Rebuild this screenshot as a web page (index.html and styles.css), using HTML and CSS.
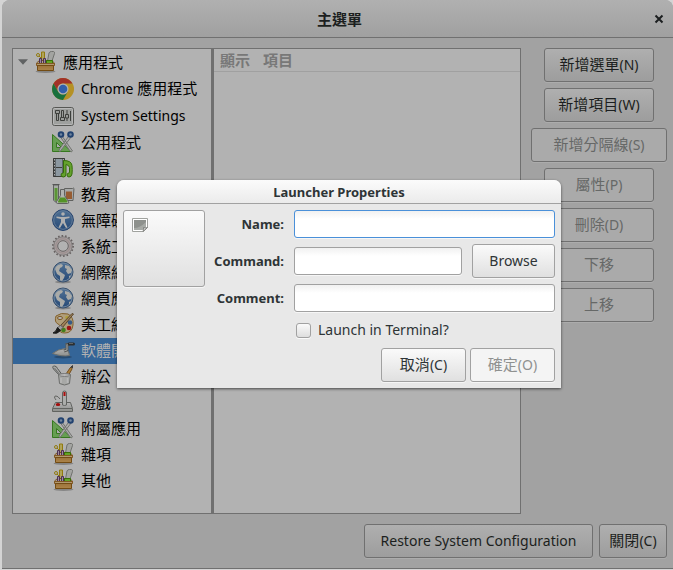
FILE: index.html
```html
<!DOCTYPE html>
<html lang="zh-Hant">
<head>
<meta charset="utf-8">
<title>主選單</title>
<link rel="stylesheet" href="styles.css">
</head>
<body>
<svg class="sprite" aria-hidden="true">
  <defs>
    <linearGradient id="g-blue" x1="0" y1="0" x2="0" y2="1"><stop offset="0" stop-color="#729fcf"/><stop offset="1" stop-color="#3465a4"/></linearGradient>
    <linearGradient id="g-grey" x1="0" y1="0" x2="0" y2="1"><stop offset="0" stop-color="#fafafa"/><stop offset="1" stop-color="#c4c6c2"/></linearGradient>
    <linearGradient id="g-wood" x1="0" y1="0" x2="0" y2="1"><stop offset="0" stop-color="#d9a052"/><stop offset="1" stop-color="#efb866"/></linearGradient>
  </defs>
  <symbol id="toolbox" viewBox="0 0 24 24">
    <ellipse cx="12.500" cy="21.500" rx="10" ry="1.500" fill="#000" opacity=".25"/>
    <path d="M3.500 13l3-2.500h12l3 2.500v2h-18z" fill="#f7e2b8" stroke="#a97430"/>
    <path d="M14.500 11l1.500-8q.5-1.500 2.500-1.500h2q1.500.5 1 2L19 11z" fill="#e2e4e0" stroke="#9a9c97"/>
    <path d="M8.500 10V2h3v8" fill="#f5e27a" stroke="#c9a914"/>
    <circle cx="5" cy="5" r="1.500" fill="none" stroke="#c9a914"/><path d="M6 6l2 2" stroke="#c9a914"/>
    <path d="M6.500 13V8.500h2V13M10.500 13V8.500h2V13" fill="#d9bfd6" stroke="#6b4474"/>
    <path d="M13.500 13v-2.500h6V13" fill="#8ae234" stroke="#4e9a06"/>
    <path d="M3.500 13.500h18v2h-18z" fill="#f6d49c" stroke="#b47b34"/>
    <path d="M4.500 15.500h16v5h-16z" fill="url(#g-wood)" stroke="#a0691c"/>
  </symbol>
  <symbol id="chrome" viewBox="0 0 24 24">
    <circle cx="12" cy="12" r="11" fill="#fbc934"/>
    <path d="M2.500 6.500A11 11 0 0 1 21.500 6.500H12a5.500 5.500 0 0 0-4.800 8.200z" fill="#e04438"/>
    <path d="M2.500 6.500A11 11 0 0 0 12 23l4.800-8.300A5.500 5.500 0 0 1 7.200 14.700z" fill="#229b55"/>
    <circle cx="12" cy="12" r="5.500" fill="#f4f4f4"/><circle cx="12" cy="12" r="4.300" fill="#4384ee"/>
  </symbol>
  <symbol id="settings" viewBox="0 0 24 24">
    <rect x="1.500" y="3.500" width="21" height="18" rx="2" fill="#dcdedb" stroke="#777975"/>
    <rect x="2.500" y="4.500" width="19" height="16" rx="1" fill="none" stroke="#fff"/>
    <path d="M4.500 6.500h4v3h-4zM5.500 9.500h2v7h-2zM10.500 6.500h2v7h-2zM9.500 13.500h4v3h-4zM16 6v4M16 14v3M14.500 10.500h3v3.500h-3zM19.500 7v10" fill="#d5d7d4" stroke="#555753"/>
  </symbol>
  <symbol id="scissors" viewBox="0 0 24 24">
    <path d="M1.500 4.500v17h19z" fill="#8edb72" stroke="#4da52d"/>
    <path d="M5.500 12.500v5h5z" fill="#f0f0f0" stroke="#4da52d"/>
    <path d="M8.500 5.500L19 21q1.500 1.500 2.500 0L11 6M18.500 5L8.500 19q-1 2 .5 2.500L20.500 6.500" fill="#f1f2f0" stroke="#9c9e9a"/>
    <circle cx="10" cy="4.500" r="2.300" fill="#9db9da" stroke="#2f5c9b" stroke-width="2"/>
    <circle cx="19.500" cy="4.500" r="2.300" fill="#9db9da" stroke="#2f5c9b" stroke-width="2"/>
  </symbol>
  <symbol id="media" viewBox="0 0 24 24">
    <path d="M2.500 2.500h11v18h-11z" fill="#c3d3e0" stroke="#555753"/>
    <path d="M3.500 2v19M12.500 2v19" stroke="#4a4d4d" stroke-width="2"/><path d="M3.500 3v18M12.500 3v18" stroke="#eee" stroke-dasharray="1.500 1.500"/>
    <path d="M5 11.500h6" stroke="#555753"/>
    <path d="M12.500 4.500q8 0 8.500 5 .5 4 0 8.500-.5 3-3 3-2 0-2-2t2.500-2.300V11.500q-.5-2.500-3.500-3v9.500q0 3-2.500 3-2.500 0-2.500-2t2.500-2.200z" fill="#8be03f" stroke="#4a960f"/>
  </symbol>
  <symbol id="education" viewBox="0 0 24 24">
    <path d="M2.500 3h5v15q-2.500 4-5 0z" fill="#e7efe7" stroke="#858784"/><path d="M3.500 6h3v12q-1.500 2-3 0z" fill="#7fd04a"/><path d="M1.500 2.500h7" stroke="#777"/>
    <path d="M13.500 6.500h8q1-1 1.500 0l-1 12h-8z" fill="#e9eceb" stroke="#858784"/><path d="M15 9.500h6v7.500h-6z" fill="#d08045"/>
    <path d="M9.500 7.500h4v6l4 6q1 2-1 2h-10q-2-.5-1-2l4-6z" fill="#f4f8f3" stroke="#858784"/><path d="M9 15.500h5l2.500 4q0 1-1 1h-8q-1-.3-.5-1z" fill="#73cc35"/>
  </symbol>
  <symbol id="access" viewBox="0 0 24 24">
    <circle cx="12" cy="12" r="10.400" fill="url(#g-blue)" stroke="#2d5794"/><circle cx="12" cy="12" r="9.300" fill="none" stroke="#87aad1"/>
    <circle cx="12" cy="6" r="1.800" fill="#f4f5f4"/><path d="M5.500 8.500L10 9h4l4.500-.5v1.500L14 11v3l2.500 5.500-1.500.5-3-5-3 5-1.500-.5L10 14v-3L5.500 10z" fill="#f4f5f4"/>
  </symbol>
  <symbol id="gear" viewBox="0 0 24 24">
    <circle cx="12" cy="12" r="10" fill="none" stroke="#8f8787" stroke-width="2" stroke-dasharray="1.600 1.890"/>
    <circle cx="12" cy="12" r="7.300" fill="none" stroke="#e6e0e0" stroke-width="4"/>
    <circle cx="12" cy="12" r="9.200" fill="none" stroke="#a39a9a" stroke-width=".8"/>
    <circle cx="12" cy="12" r="7.200" fill="none" stroke="#dcc8c8" stroke-width="1.500"/>
    <circle cx="12" cy="12" r="5.300" fill="none" stroke="#938b8b"/>
  </symbol>
  <symbol id="globe" viewBox="0 0 24 24">
    <ellipse cx="12" cy="22" rx="8" ry="1.500" opacity=".25"/>
    <circle cx="12" cy="12" r="10" fill="url(#g-blue)" stroke="#4c6c93"/><circle cx="12" cy="12" r="9" fill="none" stroke="#9ab9da"/>
    <path d="M4 9q1-4 6-5l2 1-1 2-2 1-1 3 3 2 3 2-1 3-2 3-2-1v-4L6 14zM14 5l4 1 3 4-1 3-3 1-2-3 1-2-2-1zM18 16l2-1-2 4z" fill="#eceeea"/>
  </symbol>
  <symbol id="palette" viewBox="0 0 24 24">
    <path d="M5 4q5-4 12-2 6 3 5 11-1 8-8 8-6 0-6-4 2-4-1-5-4-2-2-8z" fill="#f4dca9" stroke="#b5853c"/>
    <ellipse cx="9" cy="6" rx="2.500" ry="1.600" fill="#f4f4f4" stroke="#b07d38"/><circle cx="16" cy="5.500" r="1.800" fill="#f5dc52"/><circle cx="19" cy="10.500" r="2.300" fill="#4e7fb9"/><circle cx="18" cy="16" r="2.300" fill="#dc1d1d"/><circle cx="12.500" cy="18" r="2.300" fill="#5cb224"/>
    <path d="M21 1.500L9.500 13.500l2 2L22.500 2z" fill="#ddb27a" stroke="#7d6440"/><path d="M9.500 13l2.500 2.500-3 3L6.500 16z" fill="#ddd" stroke="#777"/><path d="M6.500 15.500l3 3Q6 22.500 2 21q3-1 4.500-5.500z" fill="#242626" stroke="#242626"/>
  </symbol>
  <symbol id="trowel" viewBox="0 0 24 24">
    <ellipse cx="12" cy="19" rx="9" ry="1.500" opacity=".25"/>
    <path d="M1.500 15.500Q7 11 14.500 10.500q4 3 4 7-7 1.500-17-2z" fill="url(#g-grey)" stroke="#999b96"/>
    <path d="M13 13l3-1V6.500h3" fill="none" stroke="#7b7d7a" stroke-width="3"/><path d="M13 13l3-1V6.500h2" fill="none" stroke="#e2e4e0"/>
    <path d="M18 6h4.500" stroke="#3d4143" stroke-width="3" stroke-linecap="round"/><path d="M18 5.500h4" stroke="#85898a"/>
  </symbol>
  <symbol id="office" viewBox="0 0 24 24">
    <path d="M10 13L2.500 5q-2-3 1-3 2 0 3 2.500L12 12z" fill="#e9ebe8" stroke="#747774"/><path d="M3.500 4L10 12" stroke="#999"/>
    <path d="M13 13l6-9 2-2v3l-5 9z" fill="#f0b14b" stroke="#a06c2e"/><path d="M19.500 3.500l2-2v2.500" fill="#555" stroke="#555"/>
    <path d="M7.500 10.500q6-2 12 0l-1 9q-5 3-10 0z" fill="#e8eae7" stroke="#959794"/><ellipse cx="13.500" cy="11" rx="5" ry="1.500" fill="#fff" stroke="#aaa"/><path d="M10 14v5M16.500 14v5" stroke="#fff" stroke-width="1.500"/>
  </symbol>
  <symbol id="joystick" viewBox="0 0 24 24">
    <path d="M5 10q-3-4 0-4 2 0 4 3" fill="none" stroke="#878985"/>
    <path d="M4.500 12.500h15l2 6v3h-20v-3z" fill="url(#g-grey)" stroke="#878985"/><path d="M2 18.500h19" stroke="#878985"/>
    <path d="M11.500 15V3q0-2 2-2t2 2v12q-2 1-4 0z" fill="#eff0ee" stroke="#878985"/><path d="M12.500 2h2v4h-2z" fill="#ef1515"/><ellipse cx="7" cy="14.500" rx="2.300" ry="1.600" fill="#df1010"/>
  </symbol>
</svg>

<main class="window">
  <header class="titlebar">
    <h1>主選單</h1>
    <button class="close" aria-label="Close"><svg viewBox="0 0 10 10"><path d="M1.500 1.500l7 7M8.500 1.500l-7 7"/></svg></button>
  </header>
  <div class="content">
    <div class="upper">
      <div class="panes">
        <ul class="tree">
          <li class="root"><svg class="arrow" viewBox="0 0 11 6"><path d="M0 0h11L5.500 6z"/></svg><svg class="icon"><use href="#toolbox"/></svg>應用程式</li>
          <li class="tall"><svg class="icon"><use href="#chrome"/></svg><span><span class="latin">Chrome</span> 應用程式</span></li>
          <li class="tall"><svg class="icon"><use href="#settings"/></svg><span class="latin">System Settings</span></li>
          <li><svg class="icon"><use href="#scissors"/></svg>公用程式</li>
          <li><svg class="icon"><use href="#media"/></svg>影音</li>
          <li><svg class="icon"><use href="#education"/></svg>教育</li>
          <li><svg class="icon"><use href="#access"/></svg>無障礙</li>
          <li><svg class="icon"><use href="#gear"/></svg>系統工具</li>
          <li><svg class="icon"><use href="#globe"/></svg>網際網路</li>
          <li><svg class="icon"><use href="#globe"/></svg>網頁應用</li>
          <li><svg class="icon"><use href="#palette"/></svg>美工繪圖</li>
          <li class="selected"><svg class="icon"><use href="#trowel"/></svg>軟體開發</li>
          <li><svg class="icon"><use href="#office"/></svg>辦公</li>
          <li><svg class="icon"><use href="#joystick"/></svg>遊戲</li>
          <li><svg class="icon"><use href="#scissors"/></svg>附屬應用</li>
          <li><svg class="icon"><use href="#toolbox"/></svg>雜項</li>
          <li><svg class="icon"><use href="#toolbox"/></svg>其他</li>
        </ul>
        <div class="items">
          <table>
            <thead><tr><th class="show">顯示</th><th>項目</th></tr></thead>
            <tbody></tbody>
          </table>
        </div>
      </div>
      <div class="actions">
        <button class="btn dim">新增選單<span class="latin">(N)</span></button>
        <button class="btn dim">新增項目<span class="latin">(W)</span></button>
        <button class="btn dim wide" disabled>新增分隔線<span class="latin">(S)</span></button>
        <button class="btn dim" disabled>屬性<span class="latin">(P)</span></button>
        <button class="btn dim" disabled>刪除<span class="latin">(D)</span></button>
        <button class="btn dim" disabled>下移</button>
        <button class="btn dim" disabled>上移</button>
      </div>
    </div>
    <footer class="bottom">
      <button class="btn dim restore"><span class="latin">Restore System Configuration</span></button>
      <button class="btn dim shut">關閉<span class="latin">(C)</span></button>
    </footer>
  </div>
</main>

<section class="dialog" role="dialog" aria-labelledby="dialog-title">
  <h2 id="dialog-title">Launcher Properties</h2>
  <form>
    <div class="fields">
      <button type="button" class="btn picker" aria-label="Icon">
        <svg viewBox="0 0 16 14"><path d="M.5.500h15v9l-4 4H.5z" fill="#fff" stroke="#a0a29e"/><path d="M2 2h12v7l-3 3H2z" fill="#8e918d"/><path d="M2 10Q8 10 14 4v5l-3 3H2z" fill="#a7aaa6"/><path d="M11 13.500q1-2 .5-4 2 1 4 0z" fill="#e6e7e5" stroke="#80827f"/></svg>
      </button>
      <div class="grid">
        <label for="name">Name:</label><input class="entry span focused" id="name" type="text">
        <label for="command">Command:</label><input class="entry" id="command" type="text"><button type="button" class="btn browse">Browse</button>
        <label for="comment">Comment:</label><input class="entry span" id="comment" type="text">
        <div class="check"><input id="terminal" type="checkbox"><label for="terminal">Launch in Terminal?</label></div>
      </div>
    </div>
    <div class="answers">
      <button type="button" class="btn">取消<span class="latin">(C)</span></button>
      <button type="button" class="btn" disabled>確定<span class="latin">(O)</span></button>
    </div>
  </form>
</section>
</body>
</html>
```
FILE: styles.css
```css
* { box-sizing: border-box; }

body {
  margin: 0;
  min-height: 100vh;
  display: flex;
  padding: 0 0 1px 2px;
  position: relative;
  overflow: hidden;
  background: #d4d4d4;
  color: #000;
  font: 15px/20px "Noto Sans", "Noto Sans CJK TC", sans-serif;
}

button, input { font: inherit; color: inherit; margin: 0; }
.latin { font-size: 14px; }
.sprite { position: absolute; width: 0; height: 0; }

.window {
  flex: 1;
  display: flex;
  flex-direction: column;
  background: #a2a2a2;
  border-bottom: 1px solid #707070;
  border-radius: 8px 8px 0 0;
  overflow: hidden;
}

.titlebar {
  display: grid;
  grid-template-columns: 32px 1fr 28px;
  align-items: center;
  height: 38px;
  background: linear-gradient(#b0b0b0, #a0a0a0);
  border-bottom: 1px solid #707070;
}
.titlebar h1 {
  grid-column: 2;
  margin: 0;
  font-size: 15px;
  line-height: 20px;
  text-align: center;
  color: #1c1f20;
}
.close { padding: 0; border: 0; background: none; height: 20px; display: grid; place-items: center; }
.close svg { width: 10px; height: 10px; fill: none; stroke: #1c1f20; stroke-width: 2; }

.content { flex: 1; display: flex; flex-direction: column; gap: 10px; padding: 10px 6px 10px 10px; }
.upper { flex: 1; display: flex; gap: 10px; }
.panes { flex: 1; display: flex; border: 1px solid #707070; background: #b2b2b2; }

.tree { width: 201px; margin: 0; padding: 0; list-style: none; border-right: 3px solid #707070; }
.tree li {
  display: flex;
  align-items: center;
  gap: 6px;
  height: 26px;
  padding: 0 0 2px 38px;
  overflow: hidden;
  white-space: nowrap;
}
.tree .root, .tree .tall { height: 27px; }
.tree .root { padding-left: 5px; }
.tree .selected { background: #346598; color: #b2b2b2; }
.arrow { width: 10px; height: 6px; margin-right: -1px; fill: #606263; }
.icon { width: 24px; height: 24px; flex: none; filter: brightness(0.72); }

.items { flex: 1; }
.items table { width: 100%; border-collapse: collapse; }
.items th {
  height: 22px;
  padding: 0 6px;
  text-align: left;
  color: #787878;
  line-height: 20px;
  border-bottom: 1px solid #a0a0a0;
}
.items .show { width: 43px; }

.actions { width: 136px; display: flex; flex-direction: column; align-items: center; gap: 6px; }
.btn {
  height: 34px;
  padding: 0 0 2px;
  border: 1px solid #a1a1a1;
  border-radius: 3px;
  background: linear-gradient(#fafafa, #e0e0e0);
  box-shadow: 0 1px #f6f6f6;
  color: #2e3436;
  white-space: nowrap;
}
.btn:disabled { background: #f4f4f4; color: #8f9190; }
.dim { background: linear-gradient(#afafaf, #9d9d9d); border-color: #707070; box-shadow: 0 1px #acacac; color: #1c1f20; }
.dim:disabled { background: #aaa; color: #666867; }
.actions .btn { width: 110px; }
.actions .wide { width: 136px; }
.bottom { display: flex; justify-content: flex-end; gap: 6px; }
.restore { width: 229px; }
.shut { width: 68px; }

.dialog {
  position: absolute;
  left: 117px;
  top: 180px;
  width: 444px;
  background: #e8e8e8;
  border-radius: 7px 7px 0 0;
  box-shadow: 0 1px 3px #0009;
  color: #2e3436;
  font-size: 14px;
}
.dialog h2 {
  margin: 0;
  height: 24px;
  font-size: 13px;
  line-height: 24px;
  text-align: center;
  border-radius: 7px 7px 0 0;
  background: linear-gradient(#fbfbfb, #ebebeb);
  border-bottom: 1px solid #a1a1a1;
}
.dialog form { padding: 6px; display: flex; flex-direction: column; gap: 6px; }
.fields { display: flex; gap: 10px; }
.picker { width: 82px; height: 77px; padding: 7px 8px; display: flex; }
.picker svg { width: 16px; height: 14px; }
.grid {
  flex: 1;
  display: grid;
  grid-template-columns: 69px 1fr 83px;
  grid-template-rows: 28px 34px 28px 24px;
  gap: 6px 10px;
  align-items: center;
}
.grid > label { justify-self: end; font-size: 13px; font-weight: bold; }
.entry {
  width: 100%;
  min-width: 0;
  height: 28px;
  padding: 0 6px;
  border: 1px solid #a1a1a1;
  border-radius: 3px;
  background: linear-gradient(#f1f1f1, #fff 8px);
  box-shadow: 0 1px #f6f6f6;
}
.span { grid-column: 2 / 4; }
.focused { border-color: #4a90d9; }
.browse { padding: 0; }
.check { grid-column: 2 / 4; display: flex; align-items: center; gap: 7px; padding-left: 2px; }
.check input {
  appearance: none;
  width: 15px;
  height: 15px;
  border: 1px solid #a1a1a1;
  border-radius: 3px;
  background: linear-gradient(#fafafa, #dedede);
  box-shadow: 0 1px #fafafa;
}
.answers { display: flex; justify-content: flex-end; gap: 4px; }
.answers .btn { width: 85px; font-size: 15px; }
```
